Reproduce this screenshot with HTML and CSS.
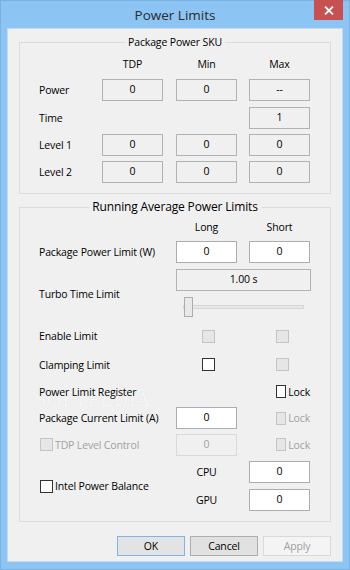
FILE: index.html
```html
<!DOCTYPE html>
<html lang="en">
<head>
    <meta charset="UTF-8">
    <meta name="viewport" content="width=device-width, initial-scale=1.0">
    <title>Power Limits</title>
    <link rel="stylesheet" href="styles.css">
</head>
<body>

    <div class="window">
        <div class="titlebar">
            <span class="title">Power Limits</span>
            <button class="close-btn" type="button">
                <svg width="10" height="9" viewBox="0 0 10 9">
                    <path d="M1 0.5 L9 8.5 M9 0.5 L1 8.5" stroke="#fff" stroke-width="1.8" fill="none"/>
                </svg>
            </button>
        </div>

        <div class="client">

            <!-- Package Power SKU -->
            <div class="group">
                <span class="group-title">Package Power SKU</span>
                <div class="sku-grid">
                    <span></span>
                    <span class="col-head">TDP</span>
                    <span class="col-head">Min</span>
                    <span class="col-head">Max</span>

                    <span class="label">Power</span>
                    <input class="field" type="text" value="0" readonly>
                    <input class="field" type="text" value="0" readonly>
                    <input class="field" type="text" value="--" readonly>

                    <span class="label">Time</span>
                    <span></span>
                    <span></span>
                    <input class="field" type="text" value="1" readonly>

                    <span class="label">Level 1</span>
                    <input class="field" type="text" value="0" readonly>
                    <input class="field" type="text" value="0" readonly>
                    <input class="field" type="text" value="0" readonly>

                    <span class="label">Level 2</span>
                    <input class="field" type="text" value="0" readonly>
                    <input class="field" type="text" value="0" readonly>
                    <input class="field" type="text" value="0" readonly>
                </div>
            </div>

            <!-- Running Average Power Limits -->
            <div class="group group-rapl">
                <span class="group-title big">Running Average Power Limits</span>
                <span class="watermark">SOFTPEDIA<sup>™</sup></span>
                <div class="rapl-grid">
                    <span></span>
                    <span class="col-head">Long</span>
                    <span class="col-head">Short</span>

                    <span class="label">Package Power Limit (W)</span>
                    <input class="field edit" type="text" value="0">
                    <input class="field edit" type="text" value="0">

                    <span class="label turbo-label">Turbo Time Limit</span>
                    <input class="field wide" type="text" value="1.00 s" readonly>
                    <div class="slider-cell">
                        <input class="slider" type="range" min="0" max="100" value="0">
                    </div>

                    <span class="label">Enable Limit</span>
                    <label class="check mid"><input type="checkbox" disabled></label>
                    <label class="check right"><input type="checkbox" disabled></label>

                    <span class="label">Clamping Limit</span>
                    <label class="check mid"><input type="checkbox"></label>
                    <label class="check right"><input type="checkbox" disabled></label>

                    <span class="label">Power Limit Register</span>
                    <span></span>
                    <label class="check right"><input type="checkbox"><span>Lock</span></label>

                    <span class="label">Package Current Limit (A)</span>
                    <input class="field edit" type="text" value="0">
                    <label class="check right off"><input type="checkbox" disabled><span>Lock</span></label>

                    <label class="check first off"><input type="checkbox" disabled><span>TDP Level Control</span></label>
                    <input class="field" type="text" value="0" disabled>
                    <label class="check right off"><input type="checkbox" disabled><span>Lock</span></label>

                    <label class="check first balance"><input type="checkbox"><span>Intel Power Balance</span></label>
                    <span class="col-head sub">CPU</span>
                    <input class="field edit" type="text" value="0">
                    <span class="col-head sub">GPU</span>
                    <input class="field edit" type="text" value="0">
                </div>
            </div>

            <div class="buttons">
                <button class="btn default" type="button">OK</button>
                <button class="btn" type="button">Cancel</button>
                <button class="btn" type="button" disabled>Apply</button>
            </div>

        </div>
    </div>

</body>
</html>
```

FILE: styles.css
```css
* {
    box-sizing: border-box;
}

body {
    margin: 0;
    width: 350px;
    height: 570px;
    background-color: #8cc4f4;
    font-family: "Open Sans", "Noto Sans", sans-serif;
    font-size: 10.5px;
    letter-spacing: -0.15px;
    color: #000;
    overflow: hidden;
}

.window {
    height: 570px;
    display: flex;
    flex-direction: column;
    border: 1px solid #79b1e3;
}

.titlebar {
    height: 27px;
    display: grid;
    grid-template-columns: 1fr auto 1fr;
}

.title {
    grid-column: 2;
    align-self: center;
    font-size: 13.5px;
    letter-spacing: 0;
    color: #2b2b2b;
}

.close-btn {
    grid-column: 3;
    justify-self: end;
    align-self: start;
    width: 29px;
    height: 20px;
    margin: -1px 6px 0 0;
    padding: 0;
    border: none;
    background-color: #c75050;
    display: flex;
    align-items: center;
    justify-content: center;
}

.client {
    flex: 1;
    margin: 0 6px 7px;
    border: 1px solid #c9d9ea;
    background-color: #f0f0f0;
    padding: 13px 11px 0;
}

.group {
    position: relative;
    border: 1px solid #dcdcdc;
}

.group-rapl {
    margin-top: 13px;
}

.group-title {
    position: absolute;
    top: -8px;
    left: 50%;
    transform: translateX(-50%);
    padding: 0 3px;
    background-color: #f0f0f0;
    line-height: 15px;
    white-space: nowrap;
}

.group-title.big {
    top: -10px;
    font-size: 12px;
    line-height: 18px;
}

.sku-grid {
    display: grid;
    grid-template-columns: 63px 74px 73px 61px;
    grid-template-rows: 19px 28px 27px 27px 27px;
    align-items: center;
    padding: 14px 0 8px 19px;
}

.rapl-grid {
    position: relative;
    display: grid;
    grid-template-columns: 137px 73px 61px;
    grid-template-rows: 18px 28px 27px 28px 30px 27px 27px 26px 27px 28px 28px;
    align-items: center;
    padding: 12px 0 7px 19px;
}

.col-head {
    align-self: start;
    width: 61px;
    text-align: center;
    line-height: 14px;
}

.col-head.sub {
    align-self: center;
}

.label {
    white-space: nowrap;
}

.turbo-label {
    grid-row: span 2;
}

.field {
    width: 61px;
    height: 22px;
    margin: 0;
    padding: 0 0 2px;
    border: 1px solid #b2b2b2;
    background-color: #f0f0f0;
    font: inherit;
    letter-spacing: inherit;
    color: #000;
    text-align: center;
    outline: none;
}

.field.edit {
    background-color: #fff;
    border-color: #abadb3;
}

.field:disabled {
    border-color: #d9d9d9;
    color: #a0a0a0;
}

.field.wide {
    grid-column: span 2;
    width: 135px;
}

.slider-cell {
    grid-column: span 2;
    padding-left: 7px;
}

.slider {
    -webkit-appearance: none;
    appearance: none;
    display: block;
    width: 121px;
    height: 20px;
    margin: 0;
    background: transparent;
}

.slider::-webkit-slider-runnable-track {
    height: 4px;
    background-color: #e7e7e7;
    border: 1px solid #d6d6d6;
}

.slider::-webkit-slider-thumb {
    -webkit-appearance: none;
    width: 9px;
    height: 20px;
    margin-top: -9px;
    background-color: #e9e9e9;
    border: 1px solid #adadad;
}

.check {
    display: flex;
    align-items: center;
    gap: 2px;
    white-space: nowrap;
}

.check.mid {
    padding-left: 26px;
}

.check.right {
    padding-left: 27px;
}

.check.first {
    padding-left: 1px;
}

.check.off {
    color: #a0a0a0;
}

.balance {
    grid-row: span 2;
}

.check input {
    -webkit-appearance: none;
    appearance: none;
    width: 13px;
    height: 13px;
    margin: 0;
    border: 1px solid #333;
    background-color: #fff;
}

.check input:disabled {
    border-color: #c4c4c4;
    background-color: #e6e6e6;
}

/* faint watermark lying behind the rows */
.watermark {
    position: absolute;
    top: 184px;
    left: 14px;
    font-family: "DejaVu Serif", serif;
    font-size: 18px;
    line-height: 16px;
    letter-spacing: 0.5px;
    color: #f7f7f7;
    text-shadow: 0 0 1px rgba(0, 0, 0, 0.1);
    pointer-events: none;
}

.watermark sup {
    font-size: 6px;
    line-height: 0;
    vertical-align: 10px;
}

.buttons {
    display: flex;
    justify-content: flex-end;
    gap: 5px;
    margin-top: 14px;
}

.btn {
    width: 68px;
    height: 20px;
    padding: 0;
    border: 1px solid #adadad;
    background-color: #e1e1e1;
    font: inherit;
    letter-spacing: inherit;
    color: #000;
}

.btn.default {
    border-color: #7eb4ea;
    background-color: #e3e3e3;
}

.btn:disabled {
    border-color: #d9d9d9;
    background-color: #f4f4f4;
    color: #a0a0a0;
}
```
